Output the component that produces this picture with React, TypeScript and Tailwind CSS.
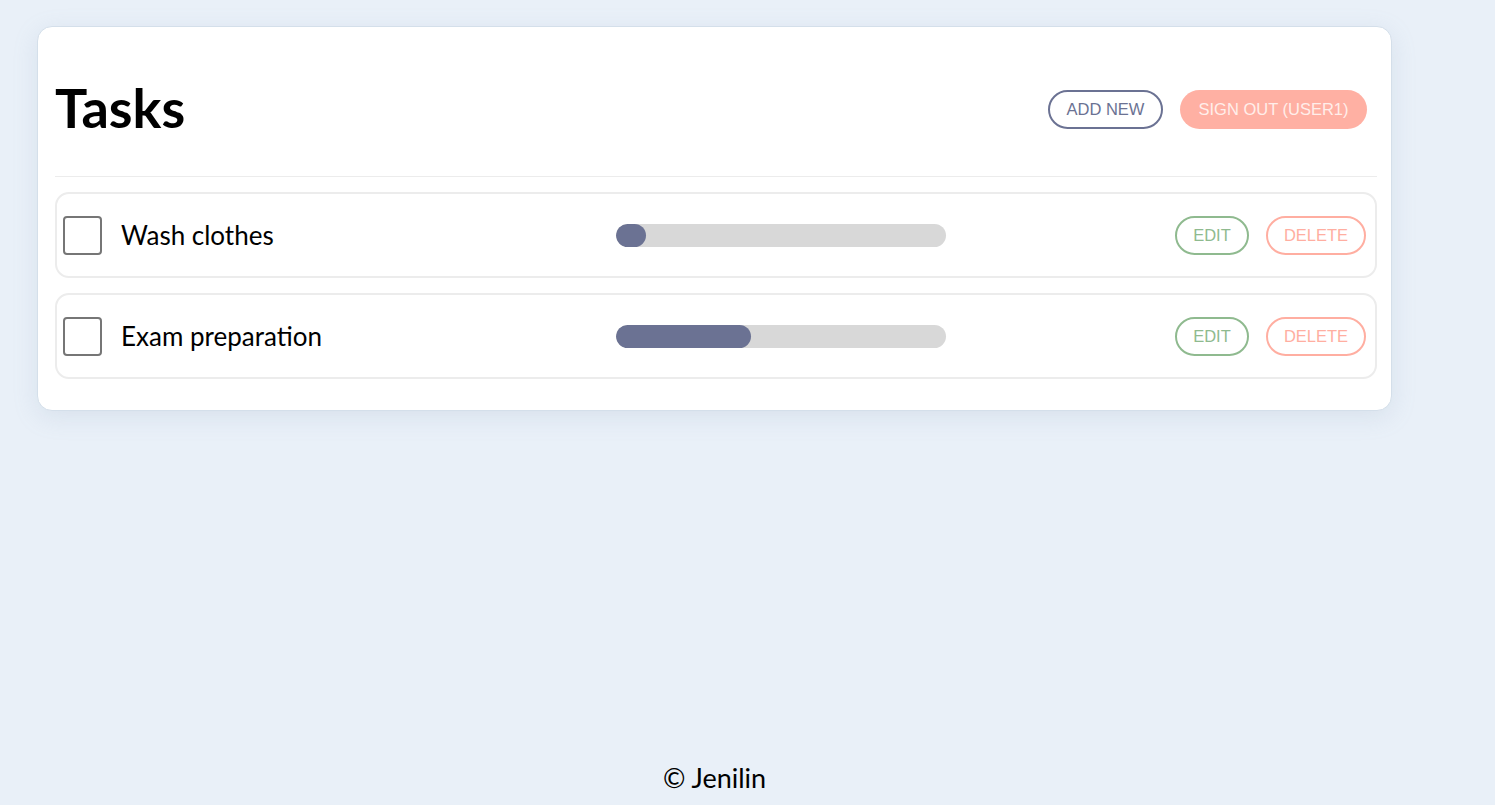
const tasks = [
  { id: 1, title: "Wash clothes", progress: 9 },
  { id: 2, title: "Exam preparation", progress: 41 },
];

const TaskRow = ({ title, progress }: { title: string; progress: number }) => {
  return (
    <div className="flex h-[86px] items-center rounded-[14px] border-2 border-[#ececec] pl-[6px] pr-[9px]">
      <div className="flex w-[553px] items-center">
        <span className="h-[39px] w-[39px] shrink-0 rounded-[4px] border-2 border-[#767676] bg-white" />
        <span className="ml-[19px] text-[26px] text-black">{title}</span>
      </div>
      <div className="h-[23px] w-[330px] overflow-hidden rounded-full bg-[#d8d8d8]">
        <div
          className="h-full min-w-[29px] rounded-full bg-[#6b7293]"
          style={{ width: `${progress}%` }}
        />
      </div>
      <div className="flex flex-1 items-center justify-end gap-[17px] font-['Liberation_Sans',Arial,sans-serif] text-[16.5px]">
        <button className="h-[39px] w-[74px] rounded-full border-2 border-[#8fba8f] text-[#8fba8f]">
          EDIT
        </button>
        <button className="h-[39px] w-[100px] rounded-full border-2 border-[#ffaea1] text-[#ffaea1]">
          DELETE
        </button>
      </div>
    </div>
  );
};

export default function App() {
  return (
    <div className="flex min-h-screen flex-col bg-[#e9f0f8] font-['Trebuchet_MS','Lato',sans-serif]">
      <div className="ml-[37px] mt-[26px] w-[1355px]">
        <div className="rounded-[15px] border border-[#d4dfea] bg-white pb-[31px] pl-[17px] pr-[14px] shadow-[0_6px_24px_rgba(140,160,190,0.18)]">
          {/* header */}
          <div className="flex h-[150px] items-center justify-between border-b border-[#ececec] pt-[12px]">
            <h1 className="text-[54px] font-bold leading-none text-black">Tasks</h1>
            <div className="mt-[4px] flex items-center gap-[17px] pr-[10px] font-['Liberation_Sans',Arial,sans-serif] text-[16.5px]">
              <button className="h-[39px] w-[115px] rounded-full border-2 border-[#6b7293] text-[#6b7293]">
                ADD NEW
              </button>
              <button className="h-[39px] w-[187px] rounded-full bg-[#ffb0a3] text-[#ffeeea]">
                SIGN OUT (USER1)
              </button>
            </div>
          </div>

          {/* list */}
          <div className="mt-[15px] flex flex-col gap-[15px]">
            {tasks.map((t) => (
              <TaskRow key={t.id} title={t.title} progress={t.progress} />
            ))}
          </div>
        </div>
      </div>

      <footer className="mt-auto ml-[37px] w-[1355px] pb-[7px] text-center text-[27px] text-black">
        © Jenilin
      </footer>
    </div>
  );
}
